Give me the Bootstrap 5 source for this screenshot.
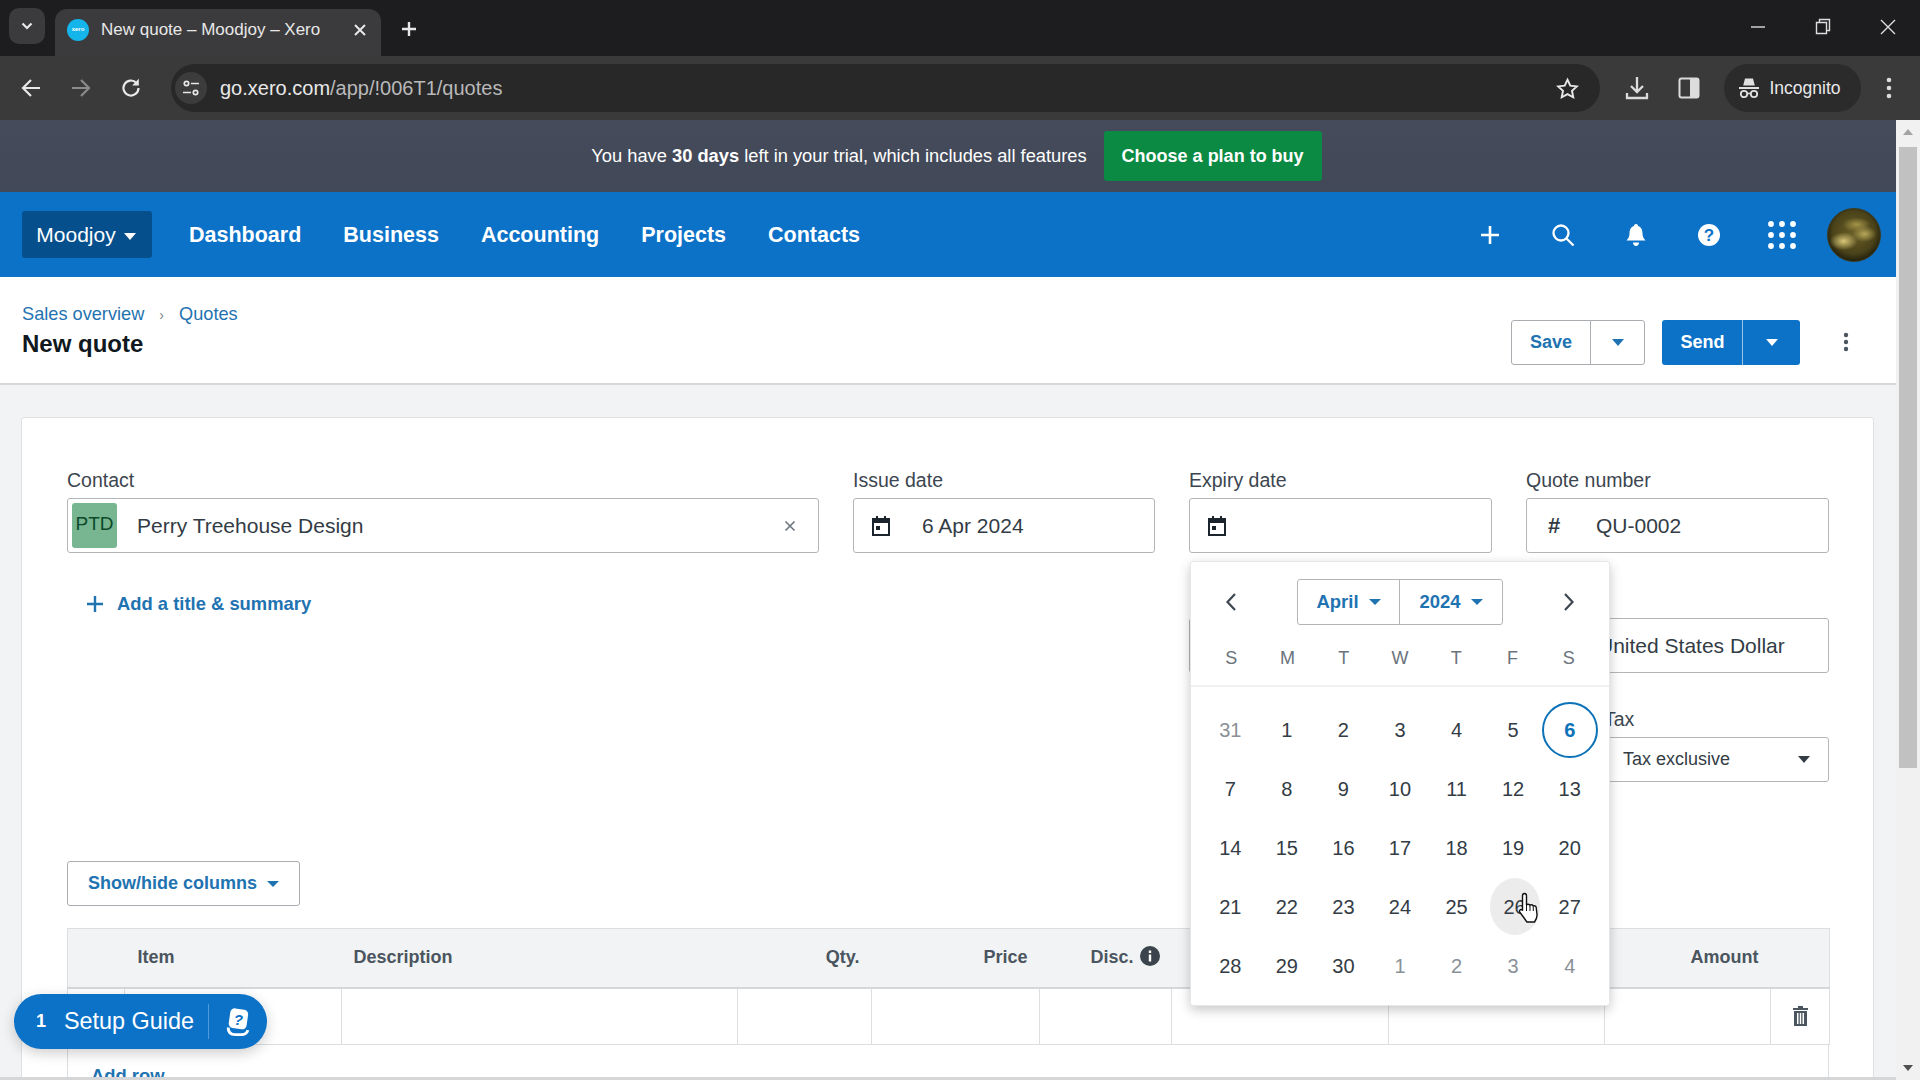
<!doctype html>
<html lang="en">
<head>
<meta charset="utf-8">
<title>New quote – Moodjoy – Xero</title>
<link href="https://cdn.jsdelivr.net/npm/bootstrap@5.3.0/dist/css/bootstrap.min.css" rel="stylesheet">
<style>
html,body{height:1080px;overflow:hidden;margin:0}
body{font-family:"Liberation Sans",Arial,sans-serif;color:#2a3540;background:#fff;width:1920px;position:relative}
a{text-decoration:none}
svg{display:block;flex:none}
/* browser chrome */
.tabstrip{height:56px;background:#1d1d1f;color:#e8e8e8;padding-top:9px}
.tabs-btn{width:36px;height:36px;margin:-1px 10px 0 9px;background:#3b3b3d;border-radius:10px}
.brtab{width:326px;height:47px;background:#3b3b3d;border-radius:12px 12px 0 0;padding:0 14px 6px 12px;font-size:17px}
.fav{width:22px;height:22px;border-radius:50%;background:#13b5ea;color:#fff;font-size:6px;font-weight:700;margin-right:12px}
.newtab{margin-left:19px;margin-top:11px}
.winctl{margin-left:auto;gap:49px;padding:0 24px 4px 0}
.toolbar{height:64px;background:#3a3a3b;padding:0 0 0 20px;color:#e8e8e8}
.tb-fwd,.tb-rel{margin-left:28px}
.omni{width:1429px;height:48px;background:#282829;border-radius:24px;margin-left:29px;padding:0 21px 0 4px;font-size:20px;color:#b9b9b9}
.omni b{font-weight:400;color:#e8e8e8}
.sitechip{width:32px;height:32px;border-radius:50%;background:#3c3c3d;margin-right:13px}
.tb-dl{margin-left:25px}
.tb-side{margin-left:29px}
.incog{height:48px;width:137px;border-radius:24px;background:#2b2b2c;font-size:17.5px;gap:9px;margin-left:24px;padding-right:6px}
.dotsv{margin-left:25px}
/* page frame */
.pagewrap{width:1896px;height:960px;overflow:hidden;position:relative}
.vscroll{position:absolute;right:0;top:120px;width:24px;height:960px;background:#f1f1f1}
.vscroll i{position:absolute;left:3px;top:27px;width:18px;height:621px;background:#c1c1c1;display:block}
.vscroll u,.vscroll s{position:absolute;left:7px;width:0;height:0;border-left:5px solid transparent;border-right:5px solid transparent}
.vscroll u{top:9px;border-bottom:6px solid #a3a3a3}
.vscroll s{bottom:9px;border-top:6px solid #505050}
.trial{height:72px;background:linear-gradient(#454b5b,#414858);color:#fff;font-size:18.3px;gap:17px;padding-left:17px}
.buybtn{background:#0b8a43;color:#fff;font-weight:700;font-size:18px;border:0;border-radius:3px;height:50px;width:218px;padding:0}
.buybtn:hover{background:#0b8a43;color:#fff}
.appnav{height:85px;background:#0c72c8;padding:0 15px 0 22px!important;justify-content:flex-start!important}
.orgbtn{width:130px;height:47px;background:#064f8d;color:#fff;font-size:21px;border:0;border-radius:3px;padding:0 2px 0 0;margin-right:37px}
.orgbtn:hover{background:#064f8d;color:#fff}
.caret-w,.caret-b,.caret-d{display:inline-block;border-left:6.5px solid transparent;border-right:6.5px solid transparent;border-top:7px solid currentColor;vertical-align:middle}
.caret-w{margin-left:8px}
.mainlink{color:#fff;font-weight:700;font-size:21.5px;margin-right:42px;padding-top:1px}
.mainlink:hover{color:#fff}
.navicons{margin-left:auto;gap:0}
.navic{width:73px;display:flex;justify-content:center;align-items:center}
.avatarpic{width:54px;height:54px;border-radius:50%;background:radial-gradient(ellipse 14px 9px at 30% 62%,#d8c878 0,transparent 100%),radial-gradient(ellipse 12px 8px at 70% 48%,#b9a85a 0,transparent 100%),radial-gradient(ellipse 14px 7px at 55% 30%,#a39448 0,transparent 100%),radial-gradient(circle at 50% 45%,#6a5f28 0,#4a4219 55%,#1b1a0c 78%,#0b0b06 100%);border:1px solid #3c3a1e;margin-left:9px}
.pagehead{height:108px;border-bottom:2px solid #d5d8da;padding:0 44px 0 22px;background:#fff}
.crumbs{font-size:18.2px;margin:0 0 2px;padding-top:0}
.crumbs a{color:#1f73b1}
.crumbs .sep{color:#7b858d;margin:0 15px;font-size:14px}
.pgtitle{font-size:24px;font-weight:700;color:#101820;margin:0}
.headact{margin-top:24px}
.btngrp-x .btn{height:45px;font-weight:700;font-size:18px;border-radius:3px;display:flex;align-items:center;justify-content:center;padding:0}
.savegrp{margin-right:17px}
.b-save{width:80px;background:#fff;color:#1f73b1;border:1px solid #a9adb1}
.b-savec{width:55px;background:#fff;color:#1f73b1;border:1px solid #a9adb1;margin-left:-1px}
.b-send{width:81px;background:#0c72c8;color:#fff;border:0}
.btn-group .b-sendc{width:58px;background:#0c72c8;color:#fff;border:0;border-left:1px solid #9cc5e6;margin-left:0}
.btn-group.btngrp-x .btn:hover{background:inherit}
.kebab{margin-left:43px;margin-right:3px}
.bodyarea{background:#f2f3f4;padding:32px 22px 0 21px;height:700px}
.sheet{background:#fff;border:1px solid #dfe1e3;border-radius:3px 3px 0 0;height:700px;padding:52px 44px 0 45px}
.fieldgrid{gap:34px}
.fld{width:303px}.fld-contact{width:752px}.fld-issue{width:302px}
.fldlabel{display:block;font-size:19.5px;line-height:20px;margin-bottom:8px;color:#3c4650}
.inbox{height:55px;border:1px solid #b3b6b9;border-radius:3px;background:#fff;display:flex;align-items:center;font-size:21px;color:#333c45}
.ptd{width:45px;height:45px;background:#77b691;color:#0c4a2b;border-radius:3px;margin-left:4px;margin-right:20px;font-size:19px;display:flex;align-items:center;justify-content:center;padding-bottom:2px}
.clearx{margin-left:auto;margin-right:22px}
.calic{margin:0 32px 0 18px}
.hash{font-weight:700;width:20px;margin:0 28px 0 21px;font-size:22px}
.midrow{height:308px}
.addlink{color:#1f73b1;font-weight:700;font-size:18.4px;gap:14px;padding:37px 0 0 20px;height:fit-content}
.rightstack{width:640px}
.currbox{margin-top:65px;padding-left:408px}
.taxwrap{width:225px;margin:36px 0 0 auto}
.taxlabel{font-size:19.5px;line-height:20px;margin-bottom:8px;display:block;color:#3c4650}
.taxsel{height:45px;font-size:18px;padding:0 18px;justify-content:space-between}
.showhide{width:233px;height:45px;background:#fff;border:1px solid #a9adb1;border-radius:3px;color:#1f73b1;font-weight:700;font-size:18px;padding:0;margin-bottom:22px}
.showhide:hover{background:#fff;color:#1f73b1;border-color:#a9adb1}
.showhide .caret-b{margin-left:10px;border-left-width:6px;border-right-width:6px;border-top-width:6px}
.linetable{width:1762px;table-layout:fixed;border-collapse:collapse;margin:0;--bs-table-bg:transparent}
.linetable th{height:59px;background:#f2f3f4;font-size:18px;font-weight:700;color:#4a5560;border:0;border-top:1px solid #dcdee0;border-bottom:2px solid #d5d8da;padding:0;vertical-align:middle}
.linetable th:first-child{border-left:1px solid #dcdee0}
.linetable th:last-child{border-right:1px solid #dcdee0}
.linetable td{height:57px;border:1px solid #dcdee0;border-top:0;padding:0;vertical-align:middle}
.tr{text-align:right}
.th-item{padding-left:13px!important}
.th-desc{padding-left:12px!important}
.th-qty,.th-price,.th-disc,.th-amt{padding-right:12px!important}
.infoic{display:inline-block;vertical-align:-3px;margin-left:6px}
.addrowbox{border:1px solid #dcdee0;border-top:0;height:60px;padding:17px 0 0 23px;width:1762px;color:#1f73b1;font-size:18.4px;font-weight:700}
/* calendar */
.expwrap{position:relative}
.calpop{position:absolute;left:1px;top:91px;width:420px;height:445px;background:#fff;border:1px solid #e6e7e8;border-radius:3px;box-shadow:0 4px 12px rgba(0,0,0,.22);z-index:20}
.calhead{height:125px;border-bottom:2px solid #f0f1f2;padding:17px 34px 0 34px}
.calnav{height:46px}
.mygrp{border:1px solid #b3b6b9;border-radius:3px;height:46px;width:206px;color:#1f73b1;font-weight:700;font-size:18.5px}
.mygrp span.g1{width:103px;border-right:1px solid #b3b6b9}
.mygrp span.g2{width:103px}
.mygrp .caret-b{margin-left:10px;border-left-width:6px;border-right-width:6px;border-top-width:6px}
.dowrow,.dayrow{display:grid;grid-template-columns:repeat(7,1fr)}
.dowrow{margin:20px -22px 0 -22px;font-size:18px;color:#6a737b;text-align:center;line-height:26px}
.dayrow{padding:13px 11px 0 11px;grid-auto-rows:59px;font-size:20px;color:#333c45}
.dcell{display:flex;align-items:center;justify-content:center;position:relative}
.dmut{color:#8a9096}
.dsel span{width:56px;height:56px;border:2px solid #0c72b8;border-radius:50%;color:#0c72b8;font-weight:700;display:flex;align-items:center;justify-content:center}
.dhov span{width:50px;height:57px;border-radius:50%;background:#ececec;display:flex;align-items:center;justify-content:center;margin-left:3px}
.handcur{position:absolute;left:32px;top:14px;z-index:3}
/* setup */
.setup{position:absolute;left:14px;top:874px;width:253px;height:55px;border-radius:28px;background:#0c72c8;color:#fff;font-size:23.4px;padding-left:22px;box-shadow:0 4px 14px rgba(0,0,0,.2);z-index:30}
.setup .numb{font-weight:700;font-size:18px;width:28px}
.setup .dvd{width:1px;height:35px;background:#4f9ad9;margin:0 16px 0 14px}
.footline{position:absolute;left:0;right:0;bottom:0;height:3px;background:#d5d6d7;z-index:10}
</style>
</head>
<body>
<div class="tabstrip d-flex align-items-start">
  <div class="tabs-btn d-flex align-items-center justify-content-center"><svg width="14" height="14" viewBox="0 0 14 14"><path d="M2.500 4.500 7 9l4.500-4.500" fill="none" stroke="#e8e8e8" stroke-width="2.200"/></svg></div>
  <div class="brtab d-flex align-items-center">
    <span class="fav d-flex align-items-center justify-content-center">xero</span>
    <span>New quote – Moodjoy – Xero</span>
    <svg class="ms-auto" width="14" height="14" viewBox="0 0 14 14"><path d="M2 2l10 10M12 2 2 12" stroke="#e8e8e8" stroke-width="2"/></svg>
  </div>
  <svg class="newtab" width="18" height="18" viewBox="0 0 18 18"><path d="M9 2v14M2 9h14" stroke="#e8e8e8" stroke-width="2.400"/></svg>
  <div class="winctl d-flex align-items-center">
    <svg width="16" height="36" viewBox="0 0 16 36"><path d="M1 18h14" stroke="#ddd" stroke-width="1.400"/></svg>
    <svg width="16" height="36" viewBox="0 0 16 36"><path d="M1.500 13.500h10v11h-10zM4.500 13V10.500h10v11H12" fill="none" stroke="#ddd" stroke-width="1.400"/></svg>
    <svg width="16" height="36" viewBox="0 0 16 36"><path d="M1 11l14 14M15 11 1 25" stroke="#ddd" stroke-width="1.400"/></svg>
  </div>
</div>
<div class="toolbar d-flex align-items-center">
  <svg width="22" height="20" viewBox="0 0 22 20"><path d="M11 2 3 10l8 8M3 10h17" fill="none" stroke="#e8e8e8" stroke-width="2.200"/></svg>
  <svg class="tb-fwd" width="22" height="20" viewBox="0 0 22 20"><path d="M11 2l8 8-8 8M19 10H2" fill="none" stroke="#8b8b8c" stroke-width="2.200"/></svg>
  <svg class="tb-rel" width="22" height="22" viewBox="0 0 22 22"><path d="M18.500 11a7.500 7.500 0 1 1-2.200-5.300" fill="none" stroke="#e8e8e8" stroke-width="2.200"/><path d="M18.800 1.800v6.600h-6.600z" fill="#e8e8e8"/></svg>
  <div class="omni d-flex align-items-center">
    <span class="sitechip d-flex align-items-center justify-content-center"><svg width="18" height="18" viewBox="0 0 18 18" fill="none" stroke="#e8e8e8" stroke-width="1.700"><circle cx="4.500" cy="4.500" r="2.200"/><path d="M9 4.500h8M1 13.500h8"/><circle cx="13.500" cy="13.500" r="2.200"/></svg></span>
    <span><b>go.xero.com</b>/app/!006T1/quotes</span>
    <svg class="ms-auto" width="23" height="23" viewBox="0 0 24 24"><path d="m12 2.800 2.900 6.200 6.800.8-5 4.600 1.300 6.700-6-3.300-6 3.300 1.300-6.700-5-4.600 6.800-.8z" fill="none" stroke="#e8e8e8" stroke-width="2"/></svg>
  </div>
  <svg class="tb-dl" width="24" height="26" viewBox="0 0 24 26" fill="none" stroke="#dcdcdc" stroke-width="2.300"><path d="M12 2v15M6 11l6 6 6-6M2 18v5h20v-5"/></svg>
  <svg class="tb-side" width="22" height="22" viewBox="0 0 22 22"><rect x="1.500" y="1.500" width="19" height="19" rx="2" fill="none" stroke="#dcdcdc" stroke-width="2"/><rect x="12" y="2" width="8" height="18" fill="#dcdcdc"/></svg>
  <div class="incog d-flex align-items-center justify-content-center">
    <svg width="22" height="22" viewBox="0 0 22 22" fill="#e0e0e0"><path d="M7 1.500h8l1.800 7H5.200zM1 10h20v2H1z"/><circle cx="6" cy="17" r="3.200" fill="none" stroke="#e0e0e0" stroke-width="1.800"/><circle cx="16" cy="17" r="3.200" fill="none" stroke="#e0e0e0" stroke-width="1.800"/><path d="M9 16.500h4" stroke="#e0e0e0" stroke-width="1.600"/></svg>
    <span>Incognito</span>
  </div>
  <svg class="dotsv" width="6" height="24" viewBox="0 0 6 24" fill="#dcdcdc"><circle cx="3" cy="4" r="2.300"/><circle cx="3" cy="12" r="2.300"/><circle cx="3" cy="20" r="2.300"/></svg>
</div>
<div class="vscroll"><u></u><i></i><s></s></div>
<div class="pagewrap">
  <div class="trial d-flex align-items-center justify-content-center">
    <span>You have <strong>30 days</strong> left in your trial, which includes all features</span>
    <button class="btn buybtn" type="button">Choose a plan to buy</button>
  </div>
  <nav class="navbar appnav">
    <button class="btn orgbtn" type="button">Moodjoy<span class="caret-w"></span></button>
    <a class="mainlink" href="#">Dashboard</a>
    <a class="mainlink" href="#">Business</a>
    <a class="mainlink" href="#">Accounting</a>
    <a class="mainlink" href="#">Projects</a>
    <a class="mainlink" href="#">Contacts</a>
    <div class="navicons d-flex align-items-center">
      <span class="navic"><svg width="20" height="20" viewBox="0 0 20 20"><path d="M10 1v18M1 10h18" stroke="#fff" stroke-width="2.600"/></svg></span>
      <span class="navic"><svg width="24" height="24" viewBox="0 0 24 24" fill="none" stroke="#fff" stroke-width="2.300"><circle cx="10" cy="10" r="7.500"/><path d="m15.500 15.500 7 7"/></svg></span>
      <span class="navic"><svg width="22" height="24" viewBox="0 0 22 24" fill="#fff"><path d="M11 1c1.200 0 2 .8 2 2 3.400 1 4.500 4 4.500 7.500 0 3 1.200 5 3 7H1.500c1.800-2 3-4 3-7C4.500 7 5.600 4 9 3c0-1.200.8-2 2-2z"/><path d="M8 19.500h6c0 2-1.300 3.500-3 3.500s-3-1.500-3-3.500z"/></svg></span>
      <span class="navic"><svg width="24" height="24" viewBox="0 0 24 24"><circle cx="12" cy="12" r="11" fill="#fff"/><text x="12" y="18" text-anchor="middle" font-family="Liberation Sans" font-weight="700" font-size="17" fill="#0c72c8">?</text></svg></span>
      <span class="navic"><svg width="30" height="30" viewBox="0 0 30 30" fill="#fff"><circle cx="4" cy="4" r="2.900"/><circle cx="15" cy="4" r="2.900"/><circle cx="26" cy="4" r="2.900"/><circle cx="4" cy="15" r="2.900"/><circle cx="15" cy="15" r="2.900"/><circle cx="26" cy="15" r="2.900"/><circle cx="4" cy="26" r="2.900"/><circle cx="15" cy="26" r="2.900"/><circle cx="26" cy="26" r="2.900"/></svg></span>
      <span class="avatarpic"></span>
    </div>
  </nav>
  <header class="pagehead d-flex align-items-center justify-content-between">
    <div>
      <div class="crumbs"><a href="#">Sales overview</a><span class="sep">›</span><a href="#">Quotes</a></div>
      <h1 class="pgtitle">New quote</h1>
    </div>
    <div class="d-flex align-items-center headact">
      <div class="btn-group btngrp-x savegrp">
        <button class="btn b-save" type="button">Save</button>
        <button class="btn b-savec" type="button"><span class="caret-d"></span></button>
      </div>
      <div class="btn-group btngrp-x">
        <button class="btn b-send" type="button">Send</button>
        <button class="btn b-sendc" type="button"><span class="caret-d"></span></button>
      </div>
      <svg class="kebab" width="6" height="20" viewBox="0 0 6 20" fill="#4a5560"><circle cx="3" cy="3" r="2.200"/><circle cx="3" cy="10" r="2.200"/><circle cx="3" cy="17" r="2.200"/></svg>
    </div>
  </header>
  <main class="bodyarea">
    <div class="sheet">
      <div class="d-flex fieldgrid">
        <div class="fld-contact"><label class="fldlabel">Contact</label>
          <div class="inbox"><span class="ptd">PTD</span><span>Perry Treehouse Design</span>
            <svg class="clearx" width="12" height="12" viewBox="0 0 12 12"><path d="M1.500 1.500l9 9M10.500 1.500l-9 9" stroke="#6d757c" stroke-width="1.600"/></svg></div></div>
        <div class="fld-issue"><label class="fldlabel">Issue date</label>
          <div class="inbox"><svg class="calic" width="18" height="20" viewBox="0 0 18 20"><path d="M1 3h16v16H1z" fill="none" stroke="#1b242c" stroke-width="2"/><path d="M1 2h16v5H1zM4 0h2v3H4zM12 0h2v3h-2zM4 10h4v4H4z" fill="#1b242c"/></svg><span>6 Apr 2024</span></div></div>
        <div class="fld expwrap"><label class="fldlabel">Expiry date</label>
          <div class="inbox"><svg class="calic" width="18" height="20" viewBox="0 0 18 20"><path d="M1 3h16v16H1z" fill="none" stroke="#1b242c" stroke-width="2"/><path d="M1 2h16v5H1zM4 0h2v3H4zM12 0h2v3h-2zM4 10h4v4H4z" fill="#1b242c"/></svg></div>
          <div class="calpop">
            <div class="calhead">
              <div class="calnav d-flex align-items-center justify-content-between">
                <svg width="12" height="20" viewBox="0 0 12 20"><path d="M10 2 2.500 10l7.500 8" fill="none" stroke="#3f4850" stroke-width="2.200"/></svg>
                <div class="mygrp d-flex align-items-center">
                  <span class="g1 h-100 d-flex align-items-center justify-content-center">April<span class="caret-b"></span></span>
                  <span class="g2 h-100 d-flex align-items-center justify-content-center">2024<span class="caret-b"></span></span>
                </div>
                <svg width="12" height="20" viewBox="0 0 12 20"><path d="M2 2l7.500 8L2 18" fill="none" stroke="#3f4850" stroke-width="2.200"/></svg>
              </div>
              <div class="dowrow"><span>S</span><span>M</span><span>T</span><span>W</span><span>T</span><span>F</span><span>S</span></div>
            </div>
            <div class="dayrow">
              <div class="dcell dmut">31</div><div class="dcell">1</div><div class="dcell">2</div><div class="dcell">3</div><div class="dcell">4</div><div class="dcell">5</div><div class="dcell dsel"><span>6</span></div>
              <div class="dcell">7</div><div class="dcell">8</div><div class="dcell">9</div><div class="dcell">10</div><div class="dcell">11</div><div class="dcell">12</div><div class="dcell">13</div>
              <div class="dcell">14</div><div class="dcell">15</div><div class="dcell">16</div><div class="dcell">17</div><div class="dcell">18</div><div class="dcell">19</div><div class="dcell">20</div>
              <div class="dcell">21</div><div class="dcell">22</div><div class="dcell">23</div><div class="dcell">24</div><div class="dcell">25</div><div class="dcell dhov"><span>26</span>
                <svg class="handcur" width="24" height="34" viewBox="0 0 24 34"><path d="M7.500 2.500c1.300 0 2 .9 2 2.200v9.300c.5-1 2.900-1.200 3.400.4.800-1 2.800-.8 3.300.7.900-.7 2.800-.3 3 1.400l.8 7c.3 3-1 5.200-2.500 7.500H10c-1.500-2-5-7-7-9.500-1.300-1.700.3-3.800 2.200-2.700l.3 1V4.700c0-1.300.7-2.200 2-2.200z" fill="#fff" stroke="#111" stroke-width="1.400"/><path d="M9.500 14v6M13 15v5M16.300 16v4" stroke="#111" stroke-width="1"/></svg></div><div class="dcell">27</div>
              <div class="dcell">28</div><div class="dcell">29</div><div class="dcell">30</div><div class="dcell dmut">1</div><div class="dcell dmut">2</div><div class="dcell dmut">3</div><div class="dcell dmut">4</div>
            </div>
          </div>
        </div>
        <div class="fld"><label class="fldlabel">Quote number</label>
          <div class="inbox"><span class="hash">#</span><span>QU-0002</span></div></div>
      </div>
      <div class="d-flex midrow">
        <a class="addlink d-flex align-items-center" href="#"><svg width="16" height="16" viewBox="0 0 16 16"><path d="M8 0v16M0 8h16" stroke="#1f73b1" stroke-width="2.400"/></svg>Add a title &amp; summary</a>
        <div class="rightstack ms-auto">
          <div class="inbox currbox">United States Dollar</div>
          <div class="taxwrap"><label class="taxlabel">Tax</label>
            <div class="inbox taxsel"><span>Tax exclusive</span><span class="caret-d"></span></div></div>
        </div>
      </div>
      <button class="btn showhide" type="button">Show/hide columns<span class="caret-b"></span></button>
      <table class="table linetable">
        <colgroup><col style="width:57px"><col style="width:217px"><col style="width:396px"><col style="width:134px"><col style="width:168px"><col style="width:132px"><col style="width:217px"><col style="width:216px"><col style="width:166px"><col style="width:59px"></colgroup>
        <thead><tr>
          <th></th><th class="th-item">Item</th><th class="th-desc">Description</th>
          <th class="tr th-qty">Qty.</th><th class="tr th-price">Price</th>
          <th class="tr th-disc">Disc.<svg class="infoic" width="20" height="20" viewBox="0 0 20 20"><circle cx="10" cy="10" r="10" fill="#3b444c"/><path d="M8.800 8.500h2.400v7H8.800zM8.800 4.500h2.400v2.400H8.800z" fill="#fff"/></svg></th>
          <th></th><th></th><th class="tr th-amt">Amount</th><th></th>
        </tr></thead>
        <tbody><tr>
          <td></td><td></td><td></td><td></td><td></td><td></td><td></td><td></td><td></td>
          <td><svg class="mx-auto" width="17" height="20" viewBox="0 0 17 20" fill="#4a5560"><path d="M6 0h5v2h5v2H1V2h5zM2 5h13v15H2zM5 7v11h1.500V7zM7.800 7v11h1.400V7zM10.500 7v11H12V7z" fill-rule="evenodd"/></svg></td>
        </tr></tbody>
      </table>
      <div class="addrowbox">Add row</div>
    </div>
  </main>
  <div class="setup d-flex align-items-center">
    <span class="numb">1</span><span>Setup Guide</span><span class="dvd"></span>
    <svg width="27" height="30" viewBox="0 0 30 32"><rect x="5" y="1.500" width="20" height="22" rx="5" fill="#fff" transform="rotate(8 15 12)"/><path d="M3.500 22c0 5 3 8 8 8h7c4 0 6-2 7-5" fill="none" stroke="#fff" stroke-width="3.200"/><text x="15" y="19" text-anchor="middle" font-family="Liberation Sans" font-weight="700" font-style="italic" font-size="17" fill="#0c72c8">?</text></svg>
  </div>
  <div class="footline"></div>
</div>
<script src="https://cdn.jsdelivr.net/npm/bootstrap@5.3.0/dist/js/bootstrap.bundle.min.js"></script>
</body>
</html>
